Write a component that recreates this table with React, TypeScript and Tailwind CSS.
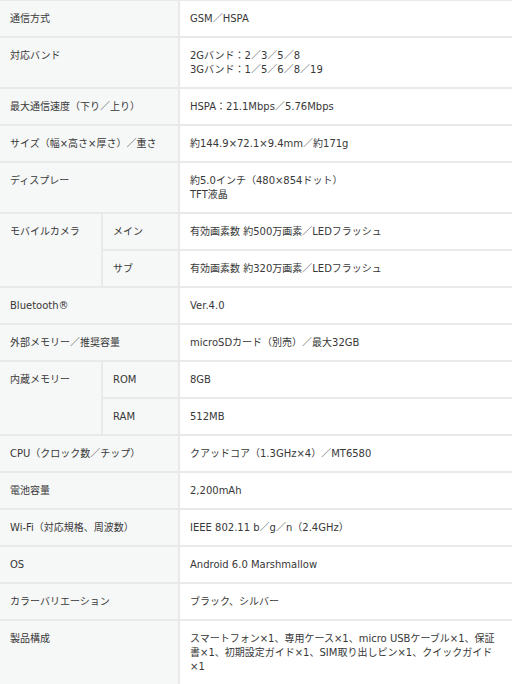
import React from 'react';

type Row = {
  label: string;
  sub?: { name: string; value: string[] }[];
  value?: string[];
};

const rows: Row[] = [
  { label: '通信方式', value: ['GSM／HSPA'] },
  { label: '対応バンド', value: ['2Gバンド：2／3／5／8', '3Gバンド：1／5／6／8／19'] },
  { label: '最大通信速度（下り／上り）', value: ['HSPA：21.1Mbps／5.76Mbps'] },
  { label: 'サイズ（幅×高さ×厚さ）／重さ', value: ['約144.9×72.1×9.4mm／約171g'] },
  { label: 'ディスプレー', value: ['約5.0インチ（480×854ドット）', 'TFT液晶'] },
  {
    label: 'モバイルカメラ',
    sub: [
      { name: 'メイン', value: ['有効画素数 約500万画素／LEDフラッシュ'] },
      { name: 'サブ', value: ['有効画素数 約320万画素／LEDフラッシュ'] },
    ],
  },
  { label: 'Bluetooth®', value: ['Ver.4.0'] },
  { label: '外部メモリー／推奨容量', value: ['microSDカード（別売）／最大32GB'] },
  {
    label: '内蔵メモリー',
    sub: [
      { name: 'ROM', value: ['8GB'] },
      { name: 'RAM', value: ['512MB'] },
    ],
  },
  { label: 'CPU（クロック数／チップ）', value: ['クアッドコア（1.3GHz×4）／MT6580'] },
  { label: '電池容量', value: ['2,200mAh'] },
  { label: 'Wi-Fi（対応規格、周波数）', value: ['IEEE 802.11 b／g／n（2.4GHz）'] },
  { label: 'OS', value: ['Android 6.0 Marshmallow'] },
  { label: 'カラーバリエーション', value: ['ブラック、シルバー'] },
  {
    label: '製品構成',
    value: ['スマートフォン×1、専用ケース×1、micro USBケーブル×1、保証書×1、初期設定ガイド×1、SIM取り出しピン×1、クイックガイド×1'],
  },
];

const th = 'bg-[#f6f7f7] border-b-2 border-r-2 border-[#e9e9e9] pl-[10px] pr-[6px] pt-[11px] pb-[10px] text-left align-top font-normal';
const td = 'bg-white border-b-2 border-[#e9e9e9] pl-[10px] pr-[12px] pt-[11px] pb-[10px] align-top';

function Lines({ lines }: { lines: string[] }) {
  return (
    <>
      {lines.map((l, i) => (
        <div key={i}>{l}</div>
      ))}
    </>
  );
}

export default function App() {
  return (
    <div
      className="w-[512px] bg-white text-[#383838] text-[10px] leading-[14px]"
      style={{ fontFamily: '"DejaVu Sans", "Noto Sans CJK JP", sans-serif' }}
    >
      <table className="w-full table-fixed border-collapse border-t border-[#e9e9e9]">
        <colgroup>
          <col className="w-[102px]" />
          <col className="w-[77px]" />
          <col />
        </colgroup>
        <tbody>
          {rows.map((r) =>
            r.sub ? (
              r.sub.map((s, i) => (
                <tr key={r.label + s.name}>
                  {i === 0 && (
                    <th rowSpan={r.sub!.length} className={th}>
                      {r.label}
                    </th>
                  )}
                  <th className={th}>{s.name}</th>
                  <td className={td}>
                    <Lines lines={s.value} />
                  </td>
                </tr>
              ))
            ) : (
              <tr key={r.label}>
                <th colSpan={2} className={th}>
                  {r.label}
                </th>
                <td className={td}>
                  <Lines lines={r.value!} />
                </td>
              </tr>
            )
          )}
        </tbody>
      </table>
    </div>
  );
}
